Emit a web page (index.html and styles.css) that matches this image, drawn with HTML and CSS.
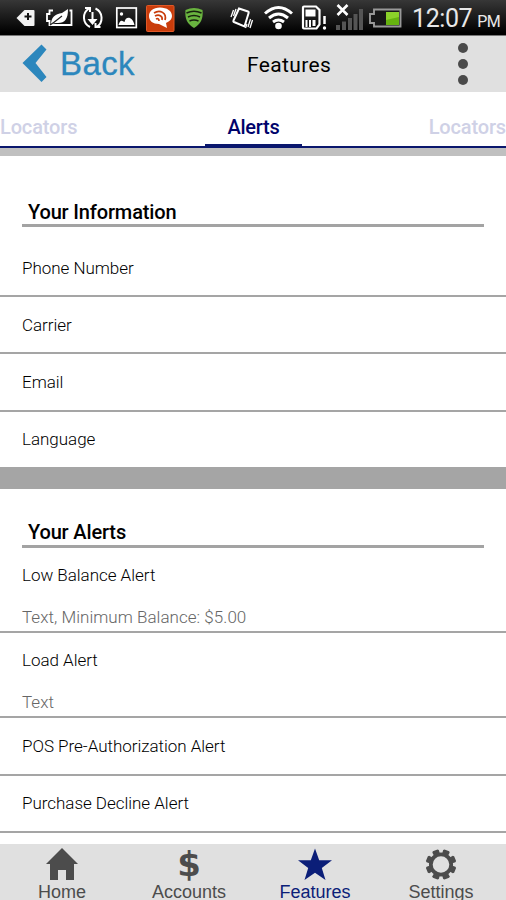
FILE: index.html
```html
<!DOCTYPE html>
<html lang="en">
<head>
<meta charset="utf-8">
<title>Features</title>
<link rel="stylesheet" href="styles.css">
</head>
<body>
<div class="screen">
  <div class="status">
    <svg class="notifications" width="220" height="35" viewBox="0 0 220 35" fill="none" stroke="#fff">
      <path d="M16.500 18l8-8h9q1 0 1 1v14q0 1-1 1h-9z" fill="#f2f2f2" stroke="none"/>
      <path d="M28 13v7M24.500 16.500h7" stroke="#111" stroke-width="2"/>
      <path d="M53 10.500h-3.500v3.500h-2.500v7h2.500v4h22v-14.500h-2" stroke-width="1.800"/>
      <path d="M51 25c0-8 4-11 11-12l6-4c0 10-3 14-10 14-3 0-5 0-7 2z" fill="#fff" stroke="none"/>
      <path d="M50 25c5-3 8-6 12-9" stroke="#222" stroke-width="1.200"/>
      <path d="M89 8.500a10.500 10.500 0 0 0 1 18.500M96.500 27a10.500 10.500 0 0 0-1-18.500M85 8h5v4M100.500 27h-5v-4" stroke-width="2"/>
      <path d="M91.500 12v7h-4l5 6 5-6h-4v-7z" fill="#fff" stroke="none"/>
      <rect x="116.800" y="8" width="19.500" height="19.500" stroke-width="1.700"/>
      <path d="M118.500 25c1-3 2-5 4-4l2 1c1-6 8-6 10 3z" fill="#fff" stroke="none"/><circle cx="121.500" cy="14" r="1.700" fill="#fff" stroke="none"/>
      <rect x="146.500" y="5.500" width="27.500" height="26" rx="1" fill="#c93c0b" stroke="#df5827"/>
      <path d="M160 7.500c-7 0-11 4-11 8.500 0 5 4 8 10 8l8 4-1-5c4-2 6-4 6-7 0-5-5-8.500-12-8.500z" fill="#fff" stroke="none"/>
      <path d="M154 13c6-4 13 0 11 7M155 16c4-2 8 0 7 4M156 19c2-1 3 0 3 2" stroke="#c93c0b" stroke-width="1.700"/>
      <path d="M185.500 10q8.500-4 17 0c1 9-2 14-8.500 18-6.500-4-9.500-9-8.500-18z" fill="#69b33f" stroke="none"/>
      <path d="M186.500 13q7.500-3.500 15 0M188 17q6-3 12 0M189.500 21q4.500-2 9 0" stroke="#18210f" stroke-width="1.500"/>
    </svg>
    <svg class="system" width="190" height="35" viewBox="220 0 190 35" fill="none" stroke="#fff">
      <path d="M239 8.500l9 3q1 .4.700 1.300l-4.200 13.700-10.500-4.500q-1-.5-.5-1.500z" stroke-width="2"/>
      <path d="M233.500 10l-2.500 7M236 9l-2.500 7M252.500 20l-2.500 8M250.500 19l-2.500 8M247 24l-1.500 4" stroke-width="1.300"/>
      <path d="M265 13.500q13.500-12 27 0M269 18q9.500-8 19 0M273 22q5.500-4 11 0" stroke-width="3"/>
      <circle cx="278.500" cy="26" r="3.300" fill="#fff" stroke="none"/>
      <path d="M304 6.500h12l3.500 3.500v14.500l-3 4h-12.500q-1 0-1-1v-20q0-1 1-1z" stroke-width="2.200"/>
      <path d="M305.500 9.500h10v7h-10zM305.500 20h2v7h-2zM309 20h2v7h-2zM312.500 20h3v6h-3z" fill="#fff" stroke="none"/>
      <path d="M324.500 16v8" stroke-width="2.500"/><circle cx="324.500" cy="28" r="1.700" fill="#fff" stroke="none"/>
      <path d="M337.500 5l10 10M347.500 5l-10 10" stroke-width="2.600"/>
      <path d="M336 25h4v5h-4zM342 21.500h4v8.500h-4zM348 18h4v12h-4zM353.500 14h4v16h-4zM359 9h4v21h-4z" fill="#555" stroke="none"/>
      <path d="M374 9.500h26.500v17H374V23h-4v-9h4z" fill="#181818" stroke="#999" stroke-width="1.900"/>
      <path d="M386 12h13v13h-13z" fill="#66b30f" stroke="none"/><path d="M386 12h13v5l-13 3z" fill="#8bd12a" stroke="none"/>
    </svg>
    <div class="clock">12:07<span>PM</span></div>
  </div>
  <header class="header">
    <div class="back">
      <svg width="26" height="39" viewBox="0 0 26 39"><path d="M19.500 .500l5 5L13.500 19l11 14-5 5L.500 19z" fill="#2c87bd"/></svg>
      <span>Back</span>
    </div>
    <h1>Features</h1>
    <div class="more"><i></i><i></i><i></i></div>
  </header>
  <nav class="tabs">
    <span>Locators</span><span class="current">Alerts</span><span class="last">Locators</span>
  </nav>
  <main>
    <section class="information">
      <h2>Your Information</h2>
      <ul>
        <li>Phone Number</li>
        <li>Carrier</li>
        <li>Email</li>
        <li>Language</li>
      </ul>
    </section>
    <section class="alerts">
      <h2>Your Alerts</h2>
      <ul>
        <li class="detailed"><span>Low Balance Alert</span><small>Text, Minimum Balance: $5.00</small></li>
        <li class="detailed"><span>Load Alert</span><small>Text</small></li>
        <li>POS Pre-Authorization Alert</li>
        <li>Purchase Decline Alert</li>
      </ul>
    </section>
  </main>
  <footer>
    <a><svg width="32" height="33" viewBox="0 0 32 33"><path d="M16 0l16 16h-4v16h-8V22h-8v10H4V16H0z" fill="#4c4c4c"/></svg><span>Home</span></a>
    <a><b class="dollar">$</b><span>Accounts</span></a>
    <a class="selected"><svg width="34" height="33" viewBox="0 0 34 33"><path d="M17 .500l4.200 11.700H34l-10.200 7.700L27.500 32 17 24.800 6.500 32l3.700-12.100L0 12.200h12.800z" fill="#0b1e78"/></svg><span>Features</span></a>
    <a><svg width="34" height="33" viewBox="-18 -17.500 36 35" fill="#4c4c4c"><circle r="10.800" fill="none" stroke="#4c4c4c" stroke-width="4"/><g id="teeth"><path id="tooth" d="M-3.300-11l-.4-4 1-1.200h5.400l1 1.200-.4 4z" transform="rotate(22.500)"/><use href="#tooth" transform="rotate(45)"/><use href="#tooth" transform="rotate(90)"/><use href="#tooth" transform="rotate(135)"/></g><use href="#teeth" transform="rotate(180)"/></svg><span>Settings</span></a>
  </footer>
</div>
</body>
</html>
```

FILE: styles.css
```css
* { box-sizing: border-box; }
body { margin: 0; background: #fff; font-family: Roboto, sans-serif; color: #000; }
h1, h2, ul { margin: 0; padding: 0; font-weight: 400; }
ul { list-style: none; }
svg { display: block; flex: none; }
.screen { width: 506px; height: 900px; overflow: hidden; display: flex; flex-direction: column; }

.status { height: 36px; flex: none; display: flex; background: linear-gradient(#373737, #000 94%); border-bottom: 1px solid #777; }
.clock { color: #e8e8e8; font-size: 25px; line-height: 38px; white-space: nowrap; letter-spacing: -.4px; margin-left: 2px; }
.clock span { font-size: 16px; margin-left: 5px; letter-spacing: -.6px; }

.header { height: 56px; flex: none; background: #e0e0e0; display: grid; grid-template-columns: 200px 106px 200px; align-items: center; }
.back { display: flex; align-items: center; padding-left: 22px; gap: 12px; color: #2c87bd; font: 33px/40px "Liberation Sans", sans-serif; letter-spacing: .4px; -webkit-text-stroke: .3px #2c87bd; }
.back svg { margin-bottom: 1px; }
.header h1 { font-size: 21px; line-height: 28px; letter-spacing: .35px; margin: 1px 0 0 47px; white-space: nowrap; }
.more { display: flex; flex-direction: column; gap: 6px; width: 10px; margin: 0 0 1px 152px; }
.more i { width: 10px; height: 10px; border-radius: 50%; background: #4a4a4a; }

.tabs { height: 64px; flex: none; display: grid; grid-template-columns: 205px 97px 204px; border-bottom: 8px solid #c0c0c0; box-shadow: inset 0 -2px #0a176d; font-size: 20px; font-weight: 500; line-height: 26px; color: #cfd1e6; padding-top: 22px; letter-spacing: -.15px; }
.tabs .last { text-align: right; }
.tabs .current { color: #00036b; text-align: center; border-bottom: 4px solid #0a176d; letter-spacing: -.3px; }

main { flex: 1; min-height: 0; overflow: hidden; }
h2 { font-size: 20px; font-weight: 500; line-height: 28px; height: 30px; margin: 0 22px; padding-left: 6px; border-bottom: 3px solid #a3a3a3; letter-spacing: -.15px; }
.information { height: 333px; padding-top: 42px; border-bottom: 22px solid #a5a5a5; }
.information h2 { height: 29px; }
.information ul { padding-top: 13px; }
.alerts { padding-top: 29px; }
li { height: 57px; padding: 15px 22px; font-size: 17px; font-weight: 300; line-height: 26px; letter-spacing: -.03px; color: #000; border-bottom: 2px solid #a5a5a5; }
.information li:nth-child(3) { height: 58px; }
.information li:last-child { height: 56px; padding-top: 14px; border: 0; }
.alerts li { padding-top: 14px; }
.alerts li:nth-child(3) { height: 58px; padding-top: 15px; }
.alerts .detailed { height: 85px; display: flex; flex-direction: column; gap: 16px; }
li small { font-size: 17px; color: #666; letter-spacing: .03px; }

footer { height: 56px; flex: none; background: #e0e0e0; display: grid; grid-template-columns: 124px 130px 122px 130px; }
footer a { display: flex; flex-direction: column; align-items: center; color: #4c4c4c; padding-top: 4px; font: 18px/22px "Liberation Sans", sans-serif; height: 56px; }
footer svg, .dollar { height: 33px; flex: none; }
.dollar { font: 700 34px/33px "DejaVu Sans", sans-serif; }
footer .selected { color: #0b1e78; }
```
